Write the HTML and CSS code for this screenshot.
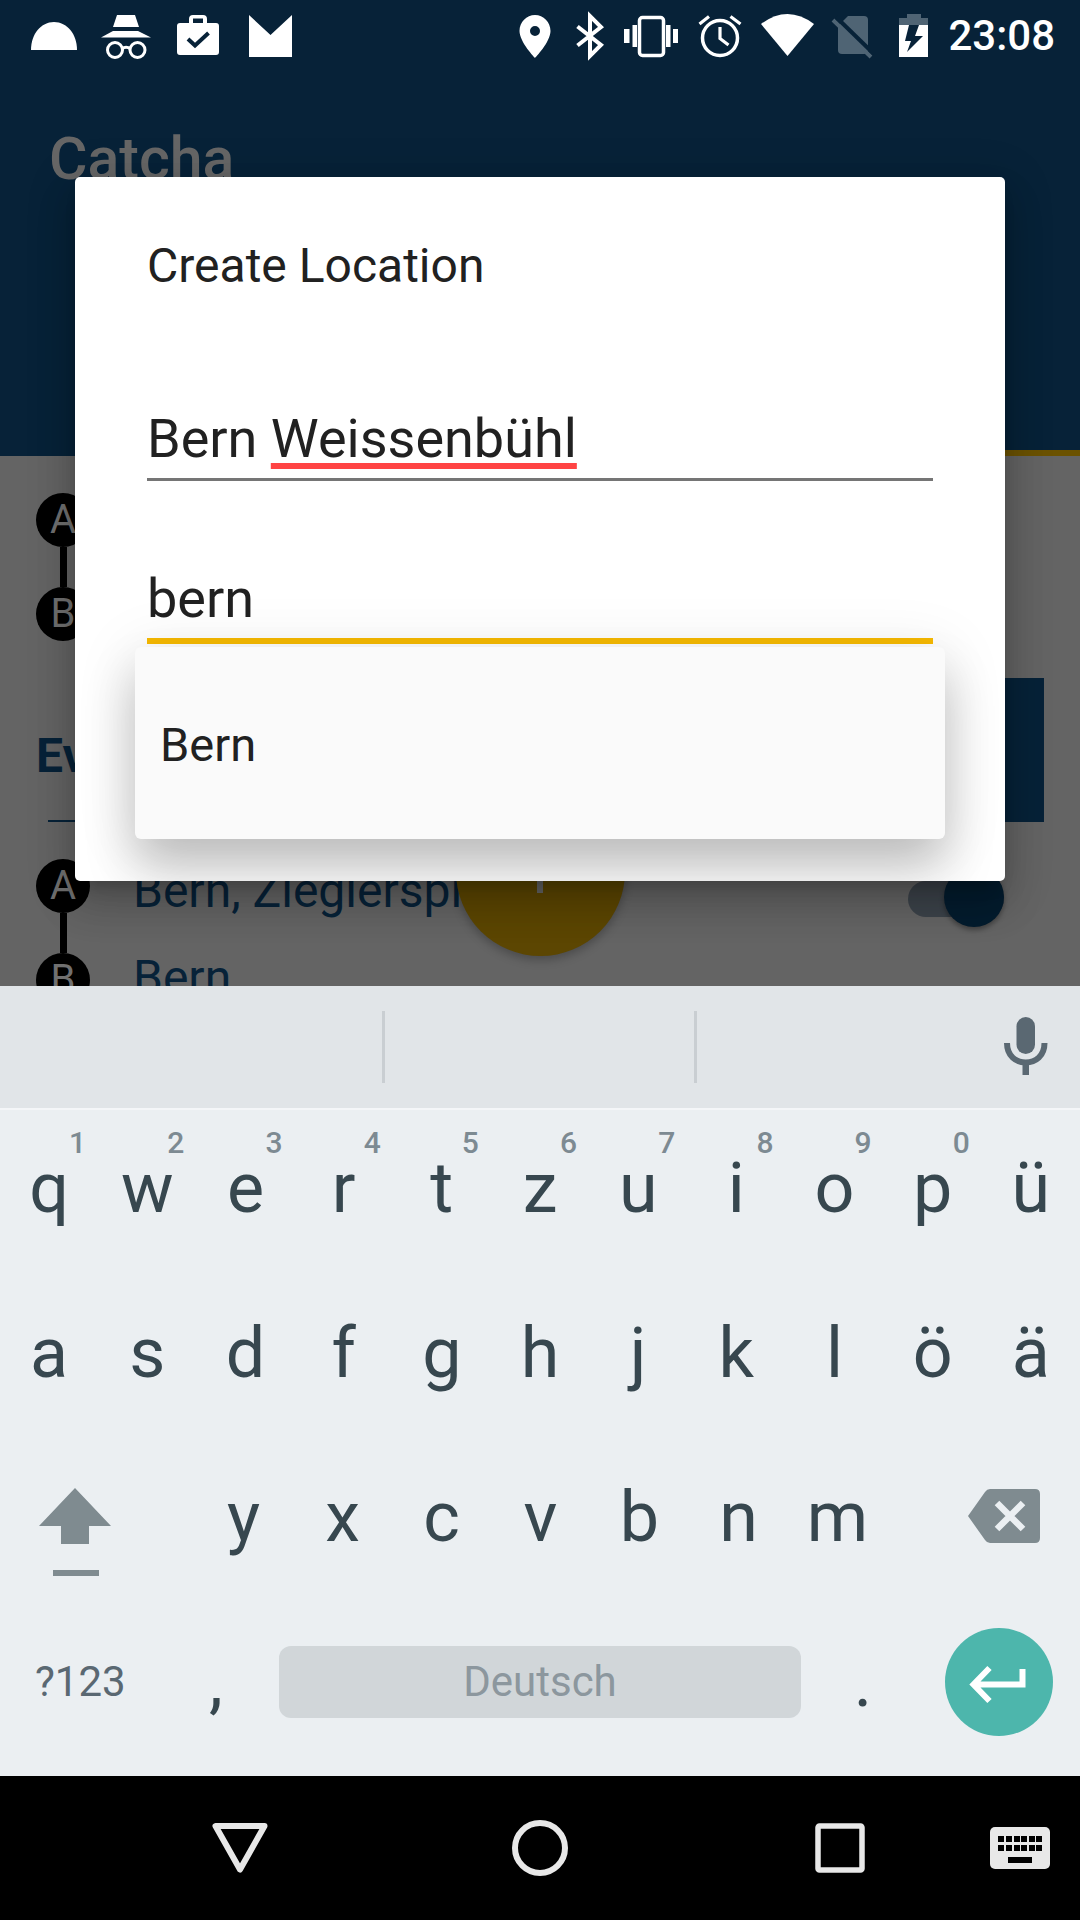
FILE: index.html
```html
<!DOCTYPE html>
<html lang="de">
<head>
<meta charset="utf-8">
<title>Catcha</title>
<link rel="stylesheet" href="styles.css">
</head>
<body>
<div class="screen">
  <div class="app">
    <header class="appbar">
      <div class="status">
        <div class="status-group">
          <svg class="ico" width="72" height="72" viewBox="18 0 72 72"><path d="M31 50C31 34 41 22 54 22S77 34 77 50Z" fill="#fff"/></svg>
          <svg class="ico" width="72" height="72" viewBox="90 0 72 72"><path d="M117 15H135L139 27H113Z" fill="#fff"/><path d="M113 31H138L151 37.5H101Z" fill="#fff"/><g fill="none" stroke="#fff" stroke-width="3"><circle cx="115" cy="50" r="7.5"/><circle cx="137.500" cy="50" r="7.500"/><path d="M122 49Q126 45.500 130.500 49"/></g></svg>
          <svg class="ico" width="72" height="72" viewBox="162 0 72 72"><path fill-rule="evenodd" d="M180 23H189V19Q189 15 193 15H203Q207 15 207 19V23H216Q219 23 219 26V52Q219 55 216 55H180Q177 55 177 52V26Q177 23 180 23ZM193 18.500V23H203V18.500Z" fill="#fff"/><path d="M188 39L195 45.500L208.500 33" fill="none" stroke="#072238" stroke-width="4"/></svg>
          <svg class="ico" width="72" height="72" viewBox="234 0 72 72"><path d="M249 15L270.500 35L292 15V57H249Z" fill="#fff"/></svg>
        </div>
        <div class="status-group">
          <svg class="ico" width="62" height="72" viewBox="503.500 0 62 72"><path fill-rule="evenodd" d="M534.500 15C526 15 519 22 519 31C519 42 534.500 58 534.500 58S550 42 550 31C550 22 543 15 534.500 15ZM534.500 26A5 5 0 1 1 534.500 36A5 5 0 1 1 534.500 26Z" fill="#fff"/></svg>
          <svg class="ico" width="46" height="72" viewBox="565 0 46 72"><path d="M576.500 26.500L600 45L589 56V16L600 27L576.500 45.500" fill="none" stroke="#fff" stroke-width="4"/></svg>
          <svg class="ico" width="78" height="72" viewBox="612 0 78 72"><rect x="639.500" y="17.500" width="24" height="38" rx="3" fill="none" stroke="#fff" stroke-width="3.500"/><path d="M624 29H629.500V43H624ZM632.500 25H637V47H632.500ZM666 25H670.500V47H666ZM673 29H678V43H673Z" fill="#fff"/></svg>
          <svg class="ico" width="60" height="72" viewBox="690 0 60 72"><circle cx="720" cy="38" r="17.500" fill="none" stroke="#fff" stroke-width="3.500"/><path d="M720 27V38.500L728.500 45M699.500 24L709 16.500M730.500 16.500L740.500 24" fill="none" stroke="#fff" stroke-width="3.200"/></svg>
          <svg class="ico" width="75" height="72" viewBox="750 0 75 72"><path d="M761 24Q787.500 4 814 24L787.500 56Z" fill="#fff"/></svg>
          <svg class="ico" width="54" height="72" viewBox="825 0 54 72"><path d="M848 16H864Q868 16 868 20V50Q868 54 864 54H842Q838 54 838 50V26Z" fill="#4f6474"/><path d="M833 20L871 57" stroke="#4f6474" stroke-width="4"/><path d="M836 17L874 54" stroke="#072238" stroke-width="4"/></svg>
          <svg class="ico" width="69" height="72" viewBox="879 0 69 72"><path d="M907 14H921V18H928V26H899V18H907Z" fill="#4f6474"/><path d="M899 25H928V57H899Z" fill="#fff"/><path d="M909 25H919L915 36H923L907 52L911 41H905Z" fill="#072238"/></svg>
          <span class="time">23:08</span>
        </div>
      </div>
      <div class="brand">Catcha</div>
      <div class="tab-line"></div>
    </header>
    <main class="content">
      <div class="route">
        <div class="nodes">
          <span class="node">A</span><span class="link"></span><span class="node">B</span>
        </div>
      </div>
      <div class="section">
        <div class="section-head">
          <span class="section-title">Ev</span>
          <span class="section-rule"></span>
        </div>
        <div class="section-button"></div>
      </div>
      <div class="route route-second">
        <div class="nodes">
          <span class="node">A</span><span class="link"></span><span class="node">B</span>
        </div>
        <div class="places">
          <div class="place">Bern, Zieglerspi</div>
          <div class="place">Bern</div>
        </div>
        <div class="switch"><span class="thumb"></span></div>
      </div>
    </main>
    <div class="fab"><span class="fab-stem"></span></div>
  </div>

  <section class="dialog">
    <div class="dialog-body">
      <h2 class="dialog-title">Create Location</h2>
      <div class="field field-name">Bern <span class="misspelled">Weissenbühl</span></div>
      <div class="field field-city">bern</div>
      <div class="dropdown"><span class="option">Bern</span></div>
    </div>
  </section>

  <section class="keyboard">
    <div class="strip">
      <span class="sep sep-a"></span>
      <span class="sep sep-b"></span>
      <svg class="mic" width="52" height="72" viewBox="1000 1012 52 72"><rect x="1016.500" y="1018" width="18.500" height="37" rx="9.250" fill="#5a6872"/><path d="M1007 1044C1007 1057 1016 1063.500 1025.750 1063.500S1044.500 1057 1044.500 1044" fill="none" stroke="#5a6872" stroke-width="6"/><rect x="1022.500" y="1063" width="6.500" height="13" fill="#5a6872"/></svg>
    </div>
    <div class="row row-eleven">
      <span class="key">q<sup class="hint">1</sup></span><span class="key">w<sup class="hint">2</sup></span><span class="key">e<sup class="hint">3</sup></span><span class="key">r<sup class="hint">4</sup></span><span class="key">t<sup class="hint">5</sup></span><span class="key">z<sup class="hint">6</sup></span><span class="key">u<sup class="hint">7</sup></span><span class="key">i<sup class="hint">8</sup></span><span class="key">o<sup class="hint">9</sup></span><span class="key">p<sup class="hint">0</sup></span><span class="key">ü</span>
    </div>
    <div class="row row-eleven">
      <span class="key">a</span><span class="key">s</span><span class="key">d</span><span class="key">f</span><span class="key">g</span><span class="key">h</span><span class="key">j</span><span class="key">k</span><span class="key">l</span><span class="key">ö</span><span class="key">ä</span>
    </div>
    <div class="row row-third">
      <svg class="cell-icon" viewBox="0 1439 194 164.500"><path d="M75 1488L111 1526H89V1544H61V1526H39Z" fill="#7f8b90"/><rect x="53" y="1570" width="46" height="6" fill="#7f8b90"/></svg>
      <span class="key">y</span><span class="key">x</span><span class="key">c</span><span class="key">v</span><span class="key">b</span><span class="key">n</span><span class="key">m</span>
      <svg class="cell-icon" viewBox="887 1439 193 164.500"><path d="M968 1516L985 1492Q987 1489 990 1489H1035Q1040 1489 1040 1494V1538Q1040 1543 1035 1543H990Q987 1543 985 1540Z" fill="#7f8b90"/><path d="M997 1503L1023 1529M1023 1503L997 1529" stroke="#ebeff2" stroke-width="6.500"/></svg>
    </div>
    <div class="row row-bottom">
      <span class="symbols">?123</span>
      <span class="key key-comma">,</span>
      <span class="space">Deutsch</span>
      <span class="key key-period">.</span>
      <span class="enter"><svg width="108" height="108" viewBox="945 1628 108 108"><path d="M1022.500 1669V1684.500H975M989.500 1668L973.500 1684.500L989.500 1701" fill="none" stroke="#fff" stroke-width="6"/></svg></span>
    </div>
  </section>

  <nav class="navbar">
    <svg class="nav-back" width="56" height="50" viewBox="212 1823 56 50"><path d="M215.500 1826H264.500L240 1869.500Z" fill="none" stroke="#e8e8e8" stroke-width="6" stroke-linejoin="round"/></svg>
    <svg class="nav-home" width="56" height="56" viewBox="512 1820 56 56"><circle cx="540" cy="1848" r="25" fill="none" stroke="#e8e8e8" stroke-width="6"/></svg>
    <svg class="nav-recent" width="50" height="50" viewBox="815 1823 50 50"><rect x="818" y="1826" width="44" height="44" rx="1.500" fill="none" stroke="#e8e8e8" stroke-width="5.500"/></svg>
    <svg class="nav-keys" width="60" height="42" viewBox="990 1827 60 42"><rect x="990" y="1827" width="60" height="42" rx="5" fill="#e8e8e8"/><path d="M998 1836h6v6h-6zM1006 1836h6v6h-6zM1014 1836h6v6h-6zM1021 1836h6v6h-6zM1029 1836h6v6h-6zM1036 1836h6v6h-6zM998 1845h6v6h-6zM1006 1845h6v6h-6zM1014 1845h6v6h-6zM1021 1845h6v6h-6zM1029 1845h6v6h-6zM1036 1845h6v6h-6zM1008 1857h24v6h-24z" fill="#000"/></svg>
  </nav>
</div>
</body>
</html>
```

FILE: styles.css
```css
* { box-sizing: border-box; }
html, body { margin: 0; padding: 0; }
body { width: 1080px; height: 1920px; overflow: hidden; font-family: Roboto, "Noto Sans", sans-serif; background: #000; }

.screen { position: relative; width: 1080px; height: 1920px; display: flex; flex-direction: column; overflow: hidden; }

/* dimmed app behind the dialog */
.app { position: relative; height: 986px; background: #646464; overflow: hidden; flex: none; }
.appbar { position: relative; height: 456px; background: #072238; }
.status { height: 72px; padding-left: 18px; display: flex; justify-content: space-between; }
.status-group { display: flex; align-items: flex-start; }
.ico { display: block; flex: none; }
.status-group + .status-group { margin-right: 25px; }
.time { color: #fff; font-size: 42px; font-weight: 500; line-height: 72px; }
.brand { margin: 52px 0 0 49px; font-size: 59px; font-weight: 500; line-height: 70px; color: #666; }
.tab-line { position: absolute; left: 800px; right: 0; bottom: 0; height: 6px; background: #6b5200; }

.content { padding: 37px 36px 0; }
.route { display: flex; height: 147px; }
.nodes { display: flex; flex-direction: column; align-items: center; width: 54px; flex: none; }
.node { width: 54px; height: 54px; border-radius: 50%; background: #000; color: #707070; font-size: 40px; line-height: 54px; text-align: center; flex: none; }
.link { width: 7px; height: 40px; background: #000; flex: none; }

.section { display: flex; justify-content: space-between; height: 144px; margin-top: 38px; }
.section-head { display: flex; flex-direction: column; }
.section-title { color: #072238; font-size: 48px; font-weight: 700; line-height: 56px; margin-top: 50px; }
.section-rule { width: 100px; height: 3px; background: #072238; margin: 36px 0 0 12px; }
.section-button { width: 100px; background: #072238; }

.route-second { margin-top: 37px; }
.places { margin-left: 43px; }
.place { color: #072238; font-size: 48px; line-height: 60px; margin-top: 2px; height: 85px; }
.switch { position: absolute; left: 908px; top: 881px; width: 96px; height: 36px; border-radius: 18px; background: #3c434a; }
.thumb { position: absolute; right: 0; top: -14px; width: 60px; height: 60px; border-radius: 50%; background: #041c2e; box-shadow: 0 3px 5px rgba(0,0,0,.35); }
.fab { position: absolute; left: 455.500px; top: 786.500px; width: 169px; height: 169px; border-radius: 50%; background: #5c4602; box-shadow: 0 4px 10px rgba(0,0,0,.25); }
.fab-stem { position: absolute; left: 81.500px; top: 60px; width: 6px; height: 46px; background: #666; }

/* dialog */
.dialog { position: absolute; left: 75px; top: 177px; width: 930px; height: 704px; background: #fff; border-radius: 5px; box-shadow: 0 24px 38px 3px rgba(0,0,0,.14), 0 9px 46px 8px rgba(0,0,0,.12), 0 11px 15px -7px rgba(0,0,0,.2); }
.dialog-body { position: relative; height: 100%; padding: 58px 72px 0; overflow: hidden; border-radius: 5px; }
.dialog-title { margin: 0; font-size: 48px; font-weight: 400; line-height: 62px; color: #212121; }
.field { font-size: 54px; line-height: 70px; color: #212121; }
.field-name { margin-top: 107px; padding-bottom: 4px; border-bottom: 3px solid #757575; }
.field-city { margin-top: 83px; padding-bottom: 4px; border-bottom: 6px solid #f8bb00; }
.misspelled { text-decoration: underline #ff4444 6px; text-underline-offset: 6px; text-decoration-skip-ink: none; }
.dropdown { position: absolute; left: 60px; top: 470px; width: 810px; height: 192px; padding: 2px 25px 0; display: flex; align-items: center; background: #fafafa; border-radius: 6px; box-shadow: 0 30px 50px rgba(0,0,0,.22), 0 6px 60px 6px rgba(0,0,0,.08); }
.option { font-size: 47px; color: #212121; }

/* keyboard */
.keyboard { height: 790px; flex: none; background: #ebeff2; display: flex; flex-direction: column; }
.strip { position: relative; height: 124px; flex: none; display: flex; align-items: center; background: #e1e5e8; border-bottom: 2px solid #f4f6f8; }
.sep { width: 3px; height: 72px; background: #c9ced2; flex: none; }
.sep-a { margin-left: 382px; }
.sep-b { margin-left: 309px; }
.mic { display: block; margin-left: auto; margin-right: 28px; flex: none; }

.row { height: 164.500px; flex: none; display: grid; color: #37474f; }
.row-eleven { grid-template-columns: repeat(11, 1fr); }
.row-third { grid-template-columns: 194px repeat(7, 99px) 1fr; }
.key { position: relative; display: block; text-align: center; font-size: 70px; line-height: 157px; color: #37474f; }
.hint { position: absolute; right: 12px; top: 15px; font-size: 30px; line-height: 36px; font-weight: 500; color: #7d8a92; vertical-align: baseline; }
.cell-icon { display: block; width: 100%; height: 100%; }

.row-bottom { flex: 1; height: auto; display: flex; align-items: center; padding-bottom: 16px; }
.symbols { width: 176px; padding-left: 35px; font-size: 42px; color: #5a6872; flex: none; }
.key-comma { width: 80px; line-height: 1; flex: none; }
.space { width: 522px; height: 72px; margin-left: 23px; border-radius: 12px; background: #d1d6d9; color: #8c979e; font-size: 42px; line-height: 72px; text-align: center; flex: none; }
.key-period { width: 124px; line-height: 1; flex: none; }
.enter { display: block; width: 108px; height: 108px; margin-left: 20px; border-radius: 50%; background: #4db6ac; flex: none; }
.enter svg { display: block; }

/* navigation */
.navbar { flex: 1; background: #000; display: flex; align-items: flex-start; padding: 47px 0 0 212px; }
.nav-back { display: block; flex: none; }
.nav-home { display: block; flex: none; margin: -3px 0 0 244px; }
.nav-recent { display: block; flex: none; margin-left: 247px; }
.nav-keys { display: block; flex: none; margin: 4px 0 0 125px; }
```
